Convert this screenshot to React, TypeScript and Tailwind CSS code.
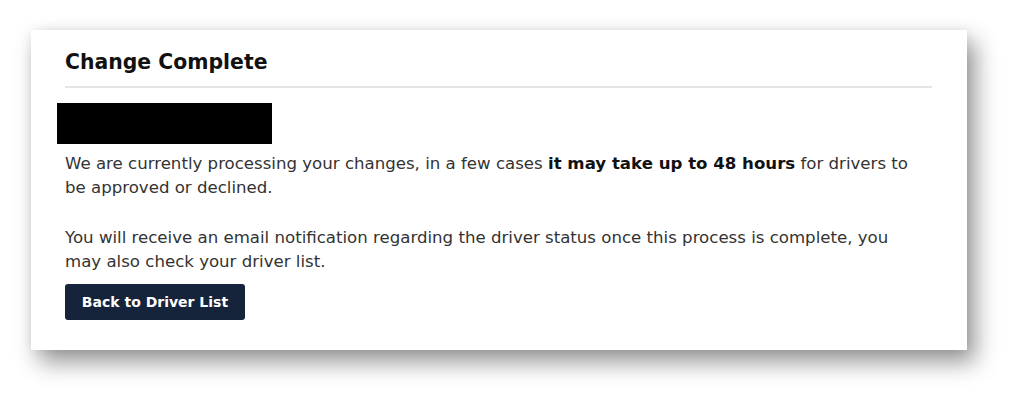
import React from 'react';

const App: React.FC = () => {
  return (
    <div className="w-[1030px] h-[412px] bg-white pt-[30px] pl-[31px]" style={{ fontFamily: '"DejaVu Sans", sans-serif' }}>
      <div className="w-[936px] h-[320px] bg-white shadow-[8px_12px_22px_rgba(0,0,0,0.42),0_0_10px_rgba(0,0,0,0.07)] pl-[34px] pr-[35px] pt-[18px]">
        <h1 className="text-[20.4px] font-bold text-[#111] leading-[28px] pb-[10px] border-b-2 border-[#e5e5e5]">Change Complete</h1>
        <div className="mt-[15px] -ml-[8px] w-[215px] h-[41px] bg-black" />
        <p className="mt-[8px] max-w-[855px] text-[16.6px] leading-[24px] text-[#333]">
          We are currently processing your changes, in a few cases <b className="font-bold text-[#111]">it may take up to 48 hours</b> for drivers to be approved or declined.
        </p>
        <p className="mt-[26px] max-w-[855px] text-[16.6px] leading-[24px] text-[#333]">
          You will receive an email notification regarding the driver status once this process is complete, you may also check your driver list.
        </p>
        <button className="mt-[10px] w-[180px] h-[36px] bg-[#15243a] rounded-[3px] text-white font-bold text-[14px]">Back to Driver List</button>
      </div>
    </div>
  );
};

export default App;
